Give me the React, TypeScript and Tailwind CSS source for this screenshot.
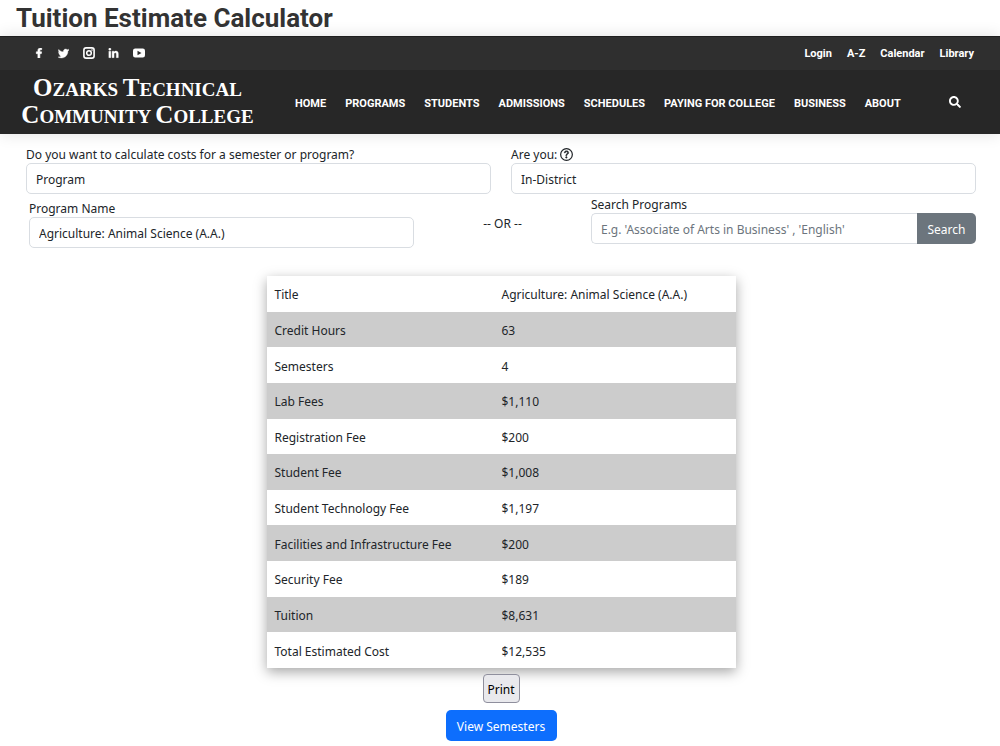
import { useState } from "react";
import { FaFacebookF, FaTwitter, FaLinkedinIn, FaSearch } from "react-icons/fa";

const social = [
  { name: "Facebook", icon: <FaFacebookF size={10} stroke="currentColor" strokeWidth={30} /> },
  { name: "Twitter", icon: <FaTwitter size={11} stroke="currentColor" strokeWidth={16} /> },
  {
    name: "Instagram",
    icon: (
      <svg width="12" height="12" viewBox="0 0 12 12" fill="none" stroke="currentColor" aria-hidden="true">
        <rect x="0.9" y="0.9" width="10.2" height="10.2" rx="2.2" strokeWidth="1.6" />
        <circle cx="6" cy="6" r="2.3" strokeWidth="1.5" />
        <circle cx="9" cy="3" r="0.8" fill="currentColor" stroke="none" />
      </svg>
    ),
  },
  { name: "LinkedIn", icon: <FaLinkedinIn size={11} stroke="currentColor" strokeWidth={16} /> },
  {
    name: "YouTube",
    icon: (
      <svg width="12" height="12" viewBox="0 0 12 12" aria-hidden="true">
        <path
          fill="currentColor"
          fillRule="evenodd"
          d="M2.2 1.6h7.6A2.2 2.2 0 0 1 12 3.8v4.4a2.2 2.2 0 0 1-2.2 2.2H2.2A2.2 2.2 0 0 1 0 8.2V3.8A2.2 2.2 0 0 1 2.2 1.6zM4.500 3.700v4.600L8.500 6z"
        />
      </svg>
    ),
  },
];

const topLinks = ["Login", "A-Z", "Calendar", "Library"];
const navLinks = ["HOME", "PROGRAMS", "STUDENTS", "ADMISSIONS", "SCHEDULES", "PAYING FOR COLLEGE", "BUSINESS", "ABOUT"];

const costs = [
  ["Title", "Agriculture: Animal Science (A.A.)"],
  ["Credit Hours", "63"],
  ["Semesters", "4"],
  ["Lab Fees", "$1,110"],
  ["Registration Fee", "$200"],
  ["Student Fee", "$1,008"],
  ["Student Technology Fee", "$1,197"],
  ["Facilities and Infrastructure Fee", "$200"],
  ["Security Fee", "$189"],
  ["Tuition", "$8,631"],
  ["Total Estimated Cost", "$12,535"],
];

function Cap({ first, rest }: { first: string; rest: string }) {
  return (
    <>
      <span className="text-[25px]">{first}</span>
      {rest}
    </>
  );
}

function Select({ id, value }: { id: string; value: string }) {
  return (
    <select
      id={id}
      className="block h-[31px] w-full appearance-none rounded-[5px] border border-[#d9dde2] bg-white px-[9px] pt-[3px] text-[#212529]"
    >
      <option>{value}</option>
    </select>
  );
}

export default function App() {
  const [query, setQuery] = useState("");
  return (
    <div className="bg-white pb-1 font-['Noto_Sans',sans-serif] text-[12px] leading-5 text-[#212529]">
      <h1 className="px-4 pt-px font-[Roboto,sans-serif] text-[26px] leading-[35px] font-bold text-[#333333]">
        Tuition Estimate Calculator
      </h1>

      <header className="bg-[#272727] font-[Roboto,sans-serif] text-[11px] font-bold text-white shadow-[0_0_15px_rgba(0,0,0,0.12)]">
        <div className="flex h-[34px] items-center justify-between border-t border-[#1f1f1f] bg-[#2f2f2f] pr-[26px] pb-px pl-[26px]">
          <div className="flex">
            {social.map((s) => (
              <a key={s.name} href="#" aria-label={s.name} className="flex h-6 w-[25px] items-center justify-center">
                {s.icon}
              </a>
            ))}
          </div>
          <nav aria-label="Quick links" className="flex gap-[15px] pt-px">
            {topLinks.map((l) => (
              <a key={l} href="#">
                {l}
              </a>
            ))}
          </nav>
        </div>
        <div className="flex h-16 items-center pr-[39px] pl-5">
          <a
            href="#"
            className="w-[235px] shrink-0 text-center font-['Liberation_Serif',serif] text-[19px] leading-[25px] font-bold whitespace-nowrap"
          >
            <Cap first="O" rest="ZARKS " />
            <Cap first="T" rest="ECHNICAL" />
            <br />
            <Cap first="C" rest="OMMUNITY " />
            <Cap first="C" rest="OLLEGE" />
          </a>
          <nav aria-label="Main" className="ml-10 flex gap-[19px] pt-[3px] whitespace-nowrap">
            {navLinks.map((l) => (
              <a key={l} href="#">
                {l}
              </a>
            ))}
          </nav>
          <button type="button" aria-label="Search site" className="ml-auto">
            <FaSearch size={12} />
          </button>
        </div>
      </header>

      <main className="pt-[11px] pr-6 pl-[26px]">
        <div className="grid grid-cols-2 gap-x-5">
          <div>
            <label htmlFor="mode" className="block h-[18px]">
              Do you want to calculate costs for a semester or program?
            </label>
            <Select id="mode" value="Program" />
          </div>
          <div>
            <div className="flex h-[18px] items-center gap-[3px]">
              <label htmlFor="residency" className="pt-px">
                Are you:
              </label>
              <svg width="13" height="13" viewBox="0 0 16 16" fill="currentColor" aria-hidden="true">
                <circle cx="8" cy="8" r="7.2" fill="none" stroke="currentColor" strokeWidth="1.5" />
                <path
                  stroke="currentColor"
                  strokeWidth=".6"
                  d="M5.255 5.786a.237.237 0 0 0 .241.247h.825c.138 0 .248-.113.266-.25.09-.656.54-1.134 1.342-1.134.686 0 1.314.343 1.314 1.168 0 .635-.374.927-.965 1.371-.673.489-1.206 1.060-1.168 1.987l.003.217a.25.25 0 0 0 .25.246h.811a.25.25 0 0 0 .25-.25v-.105c0-.718.273-.927 1.010-1.486.609-.463 1.244-.977 1.244-2.056 0-1.511-1.276-2.241-2.673-2.241-1.267 0-2.655.590-2.750 2.286m1.557 5.763c0 .533.425.927 1.010.927.609 0 1.028-.394 1.028-.927 0-.552-.420-.940-1.029-.940-.584 0-1.009.388-1.009.940"
                />
              </svg>
            </div>
            <Select id="residency" value="In-District" />
          </div>
        </div>

        <div className="flex justify-between pl-[3px]">
          <div className="w-[385px] shrink pt-[5px]">
            <label htmlFor="program" className="block h-[18px]">
              Program Name
            </label>
            <Select id="program" value="Agriculture: Animal Science (A.A.)" />
          </div>
          <p className="pt-5">-- OR --</p>
          <form className="w-[385px] shrink pt-px" onSubmit={(e) => e.preventDefault()}>
            <label htmlFor="search" className="block h-[18px]">
              Search Programs
            </label>
            <div className="flex h-[31px]">
              <input
                id="search"
                type="text"
                value={query}
                onChange={(e) => setQuery(e.target.value)}
                placeholder="E.g. 'Associate of Arts in Business' , 'English'"
                className="min-w-0 flex-1 rounded-l-[5px] border border-r-0 border-[#d9dde2] bg-white px-[9px] pt-[3px] placeholder:text-[#6c757d]"
              />
              <button type="submit" className="w-[59px] rounded-r-[5px] bg-[#6c757d] pt-[3px] text-white">
                Search
              </button>
            </div>
          </form>
        </div>

        <table className="mx-auto mt-7 h-[392px] w-[469px] table-fixed border-collapse bg-white text-left shadow-[0_4px_12px_rgba(0,0,0,0.35)]">
          <tbody>
            {costs.map(([label, value]) => (
              <tr key={label} className="even:bg-[#cccccc]">
                <th scope="row" className="w-[227px] px-2 pt-[3px] font-normal">
                  {label}
                </th>
                <td className="px-2 pt-[3px]">{value}</td>
              </tr>
            ))}
          </tbody>
        </table>

        <div className="mt-[6px] flex flex-col items-center gap-[7px]">
          <button type="button" className="h-[29px] w-[37px] rounded-[4px] border border-[#8f8f9d] bg-[#e9e9ed] pt-[3px] text-black">
            Print
          </button>
          <button type="button" className="h-[31px] w-[111px] rounded-[5px] bg-[#0d6efd] pt-[3px] text-white">
            View Semesters
          </button>
        </div>
      </main>
    </div>
  );
}
